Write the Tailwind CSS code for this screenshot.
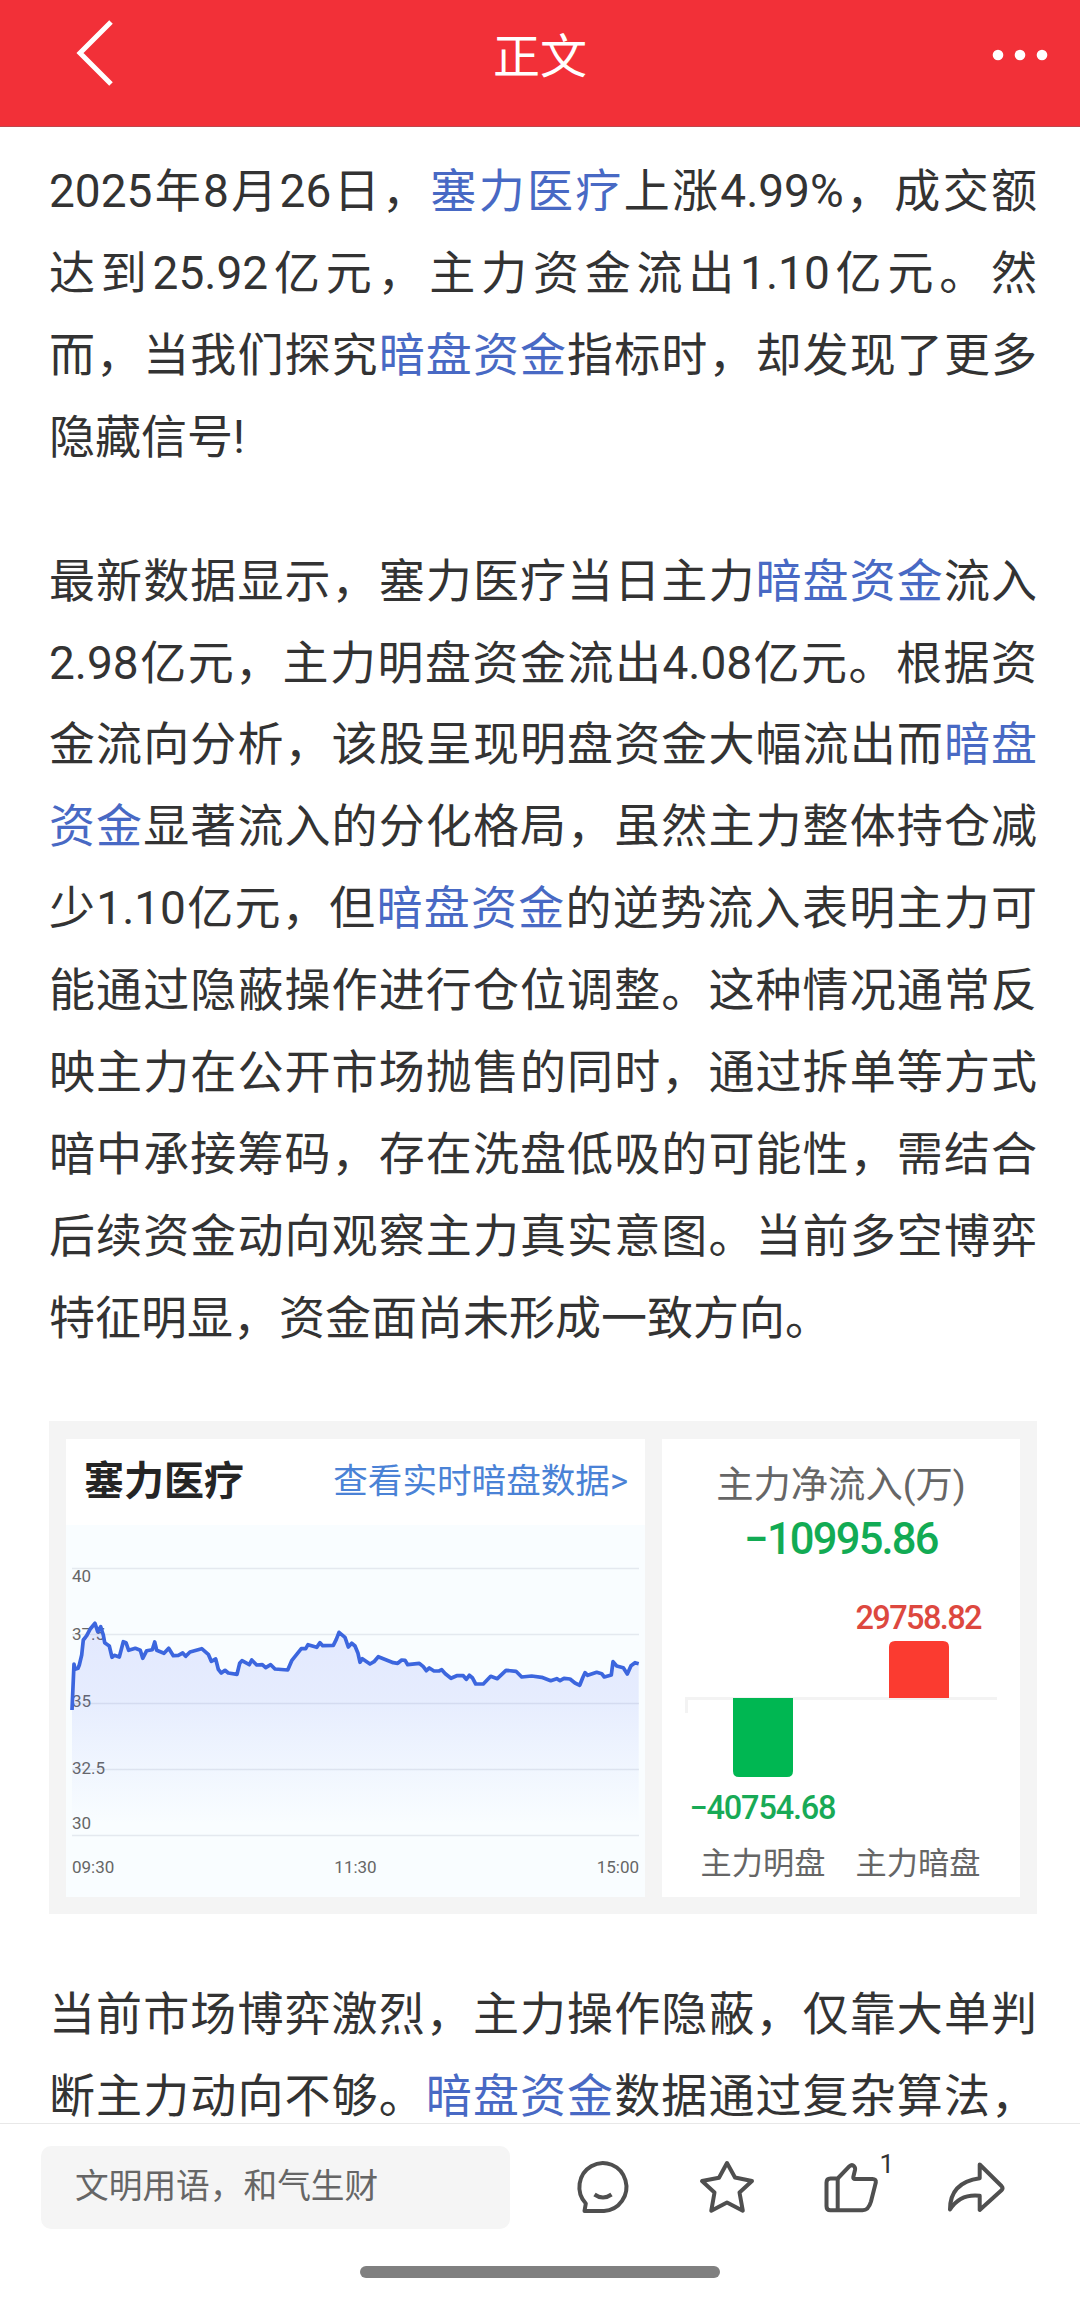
<!DOCTYPE html>
<html lang="zh-CN">
<head>
  <meta charset="UTF-8" />
  <meta name="viewport" content="width=device-width, initial-scale=1.0"/>
  <title>正文</title>
  <script src="https://cdn.jsdelivr.net/npm/@tailwindcss/browser@4"></script>
</head>
<body class="bg-white">
  <div class="w-[1080px] h-[2299px] flex flex-col overflow-hidden font-[Roboto,'Noto_Sans_CJK_SC',sans-serif] text-[#333]">

    <!-- Header -->
    <header class="h-[127px] shrink-0 bg-[#f23038] border-b border-[#c0454b] flex items-start text-white">
      <svg class="w-[60px] h-[80px] ml-[70px] mt-[12px]" viewBox="0 0 60 80" fill="none" stroke="#fff" stroke-width="5">
        <path d="M41 10 L10 41 L41 72" />
      </svg>
      <h1 class="flex-1 text-center text-[47px] leading-[60px] mt-[27px] pr-[40px]">正文</h1>
      <svg class="w-[60px] h-[20px] mr-[30px] mt-[45px]" viewBox="0 0 60 20" fill="#fff">
        <circle cx="8" cy="10" r="5.3" />
        <circle cx="30" cy="10" r="5.3" />
        <circle cx="52" cy="10" r="5.3" />
      </svg>
    </header>

    <!-- Article -->
    <main class="flex-1 min-h-0 overflow-hidden pt-[24px] pl-[49px] pr-[43px] text-[46px] leading-[81.9px] whitespace-nowrap">
      <div class="w-[988px]">
        <div class="[text-align-last:justify]">2025年8月26日，<a class="text-[#4869c4]">塞力医疗</a>上涨4.99%，成交额</div>
        <div class="[text-align-last:justify]">达到25.92亿元，主力资金流出1.10亿元。然</div>
        <div class="[text-align-last:justify]">而，当我们探究<a class="text-[#4869c4]">暗盘资金</a>指标时，却发现了更多</div>
        <div>隐藏信号!</div>
      </div>

      <div class="w-[988px] mt-[62px]">
        <div class="[text-align-last:justify]">最新数据显示，塞力医疗当日主力<a class="text-[#4869c4]">暗盘资金</a>流入</div>
        <div class="[text-align-last:justify]">2.98亿元，主力明盘资金流出4.08亿元。根据资</div>
        <div class="[text-align-last:justify]">金流向分析，该股呈现明盘资金大幅流出而<a class="text-[#4869c4]">暗盘</a></div>
        <div class="[text-align-last:justify]"><a class="text-[#4869c4]">资金</a>显著流入的分化格局，虽然主力整体持仓减</div>
        <div class="[text-align-last:justify]">少1.10亿元，但<a class="text-[#4869c4]">暗盘资金</a>的逆势流入表明主力可</div>
        <div class="[text-align-last:justify]">能通过隐蔽操作进行仓位调整。这种情况通常反</div>
        <div class="[text-align-last:justify]">映主力在公开市场抛售的同时，通过拆单等方式</div>
        <div class="[text-align-last:justify]">暗中承接筹码，存在洗盘低吸的可能性，需结合</div>
        <div class="[text-align-last:justify]">后续资金动向观察主力真实意图。当前多空博弈</div>
        <div>特征明显，资金面尚未形成一致方向。</div>
      </div>

      <!-- Stock card -->
      <div class="w-[988px] h-[493px] mt-[61px] bg-[#f4f4f4] flex gap-[17px] px-[17px] pt-[18px] pb-[17px] leading-none">
        <section class="w-[579px] bg-white flex flex-col">
          <div class="h-[86px] flex items-center justify-between pl-[18px] pr-[17px]">
            <h2 class="text-[40px] font-bold text-[#252525]">塞力医疗</h2>
            <a class="text-[34.6px] text-[#4a82d6]">查看实时暗盘数据&gt;</a>
          </div>
          <svg class="w-[579px] h-[372px]" viewBox="0 0 579 372">
            <defs>
              <linearGradient id="area" gradientUnits="userSpaceOnUse" x1="0" y1="98" x2="0" y2="310">
                <stop offset="0" stop-color="#4a5cf7" stop-opacity="0.13" />
                <stop offset="0.35" stop-color="#4a66f7" stop-opacity="0.11" />
                <stop offset="0.95" stop-color="#4a6cf7" stop-opacity="0" />
              </linearGradient>
            </defs>
            <rect width="579" height="372" fill="#f9fdff" />
            <g stroke="#e4e9ef" stroke-width="1.5">
              <path d="M6 43.5H573M6 109.5H573M6 178.5H573M6 244.5H573M6 310.5H573" />
            </g>
            <g fill="#666" font-size="17">
              <text x="6" y="57">40</text>
              <text x="6" y="115">37.5</text>
              <text x="6" y="182">35</text>
              <text x="6" y="249">32.5</text>
              <text x="6" y="304">30</text>
              <text x="6" y="348">09:30</text>
              <text x="289.5" y="348" text-anchor="middle">11:30</text>
              <text x="573" y="348" text-anchor="end">15:00</text>
            </g>
            <path id="fill" fill="url(#area)" />
            <path id="line" fill="none" stroke="#3c66de" stroke-width="3.7" stroke-linejoin="round" />
          </svg>
        </section>

        <section class="w-[358px] bg-white flex flex-col items-center">
          <div class="text-[37.3px] text-[#666] mt-[28px]">主力净流入(万)</div>
          <div class="text-[43.5px] font-medium text-[#12ab54] tracking-[-1.8px] mt-[14px]">−10995.86</div>
          <svg class="w-[358px] h-[335px] mt-auto" viewBox="0 0 358 335">
            <path d="M24.5 151V136.5H335" fill="none" stroke="#f3f3f3" stroke-width="3" />
            <path d="M71 136H131V209Q131 215 125 215H77Q71 215 71 209Z" fill="#00b752" />
            <path d="M227 136V85Q227 79 233 79H281Q287 79 287 85V136Z" fill="#fb3b30" />
            <g font-size="32.5" font-weight="500" text-anchor="middle">
              <text x="257" y="67" fill="#dd483f" textLength="127" lengthAdjust="spacing">29758.82</text>
              <text x="101" y="257" fill="#18aa56" textLength="147" lengthAdjust="spacing">−40754.68</text>
            </g>
            <g font-size="31.2" fill="#666" text-anchor="middle">
              <text x="101" y="311.5">主力明盘</text>
              <text x="256" y="311.5">主力暗盘</text>
            </g>
          </svg>
        </section>
      </div>

      <div class="w-[988px] mt-[60px]">
        <div class="[text-align-last:justify]">当前市场博弈激烈，主力操作隐蔽，仅靠大单判</div>
        <div class="[text-align-last:justify]">断主力动向不够。<a class="text-[#4869c4]">暗盘资金</a>数据通过复杂算法，</div>
      </div>
    </main>

    <!-- Bottom bar -->
    <footer class="h-[176px] shrink-0 border-t border-[#e8e8e8] bg-white flex flex-col items-center">
      <div class="w-full flex items-start pl-[41px] pt-[22px]">
        <div class="w-[469px] h-[83px] rounded-[10px] bg-[#f5f5f5] flex items-center pl-[34px] pb-[1px] text-[33.7px] text-[#666]">文明用语，和气生财</div>
        <div class="flex gap-[64.2px] ml-[63px] mt-[11px]">
          <svg class="w-[60px] h-[60px]" viewBox="0 0 60 60" fill="none" stroke="#4f4f4f" stroke-width="4" stroke-linejoin="round">
            <path d="M12.8 46.5A23.5 24 0 1 1 31 54H11.5L12.8 46.5Z" />
            <path d="M21.5 37.5Q30 43.5 38.5 37.5" />
          </svg>
          <svg class="w-[60px] h-[60px]" viewBox="0 0 60 60" fill="none" stroke="#4f4f4f" stroke-width="4" stroke-linejoin="round">
            <path d="M30 6L38 20.5L55 24L42.5 35.5L45.8 53.7L30 45.5L14.3 53.7L17.5 35.5L5 24L22 20.8Z" />
          </svg>
          <div class="relative">
            <svg class="w-[60px] h-[60px]" viewBox="0 0 60 60" fill="none" stroke="#4f4f4f" stroke-width="4" stroke-linejoin="round">
              <path d="M16.7 21.5L28.5 9.2Q31 7 33 9.2Q34.5 10.5 34 13L32.3 20Q32 22 34 22H51.5Q55.3 22 54.8 25.5L50 44.5Q47.5 53.3 41.5 53.3H9.5Q5.5 53.3 5.5 49.3V25.5Q5.5 21.5 9.5 21.5Z" />
              <path d="M16.7 21.5V53.3" />
            </svg>
            <span class="absolute left-[58px] -top-[8px] text-[26px] leading-[30px]">1</span>
          </div>
          <svg class="w-[60px] h-[60px]" viewBox="0 0 60 60" fill="none" stroke="#4f4f4f" stroke-width="4" stroke-linejoin="round">
            <path d="M33.7 7.5L55.5 29Q57.5 31.3 55.5 33.3L33.7 53V38.7Q14 36.5 4 52.5Q4 25.5 33.7 21.3Z" />
          </svg>
        </div>
      </div>
      <div class="w-[360px] h-[12px] rounded-full bg-[#808080] mt-[37px]"></div>
    </footer>
  </div>

  <script>
    // intraday price line, x/y pairs in chart units
    var points = [
      [6,185],[8,139],[9,144.3],[12,143.3],[13.3,140],[15.7,130],[17.3,115],[20.7,110.7],[24,104.3],[29,98.3],
      [31.7,106.7],[34.7,101.7],[37.3,110],[38.7,117.7],[43.3,121],[46,132.3],[48.3,130.3],[53.3,132],[57.3,116.7],[60,117.7],
      [62.7,125.3],[69.3,123.3],[74.3,125.3],[76.7,133.3],[80.7,125.7],[86.3,124.7],[88.7,117],[90.7,125.3],[98,128.3],[102.7,123.3],
      [107.3,130.7],[112.3,130.3],[116.7,128],[119.7,131.3],[124,127],[135.7,123.7],[142.3,129.3],[145.3,136.3],[149.7,134],[152.3,144.3],
      [155.3,148],[159,145.3],[162.3,148],[171,149.3],[173.7,138.3],[176,135.7],[183.3,139.7],[185.7,135],[190.7,140],[196.3,139.7],
      [199.7,142.7],[204.7,139.7],[209,144],[221.7,145],[225.7,135.7],[235.3,123.7],[239.7,123.7],[242,119.7],[250.7,122.3],[254,117.7],
      [256.7,120.7],[267.3,120.3],[270.3,114.3],[273,107.3],[279,112.3],[282.3,122],[285.7,118.3],[289,121],[292,128.3],[294,137.3],
      [296.3,133.7],[304,139],[308,136.7],[312.3,131.7],[327.3,137.7],[331.7,138.3],[335.7,135],[339,135.3],[341.7,139.7],[353.3,138.3],
      [357.3,141.7],[360.3,145.7],[363.3,143],[368,146],[373,146],[375.7,144.7],[379.3,148.7],[385,153.3],[390.7,150.7],[397.3,150.7],
      [400.3,154.3],[403.3,150.3],[406.3,152.7],[409.7,159],[417.3,159],[424.7,151.3],[431.3,153.7],[440,145.3],[450,146.3],[455.7,152],
      [465.7,151],[475.7,152.3],[484.7,155.7],[490.7,153.7],[494,155.7],[498,153.3],[504,154],[509,158],[513.7,160.3],[516.7,152.7],
      [519,147.7],[521.7,150.3],[530.7,147.3],[535.7,148.7],[538.3,152],[545.3,150],[547,136.7],[550.7,141],[557.3,142.7],[561.3,149],
      [565,140.7],[569,137.7],[572.7,138.7]
    ];
    var d = "M" + points.join("L");
    document.getElementById("line").setAttribute("d", d);
    document.getElementById("fill").setAttribute("d", d + "V310H6Z");
  </script>
</body>
</html>
